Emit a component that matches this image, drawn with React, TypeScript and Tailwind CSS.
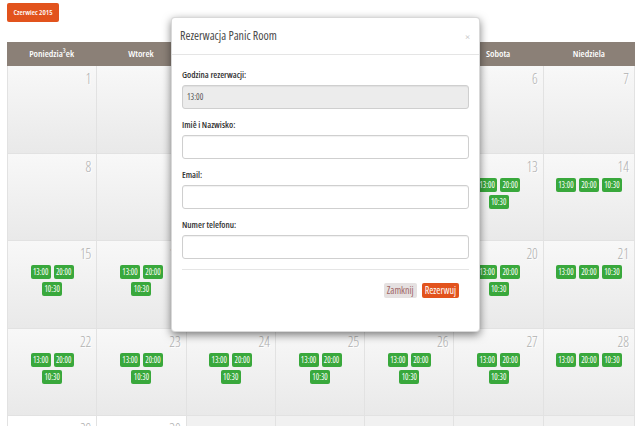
import React from "react";

// Monthly booking calendar with the reservation modal opened on top.
const DAYS = ["Poniedzia³ek", "Wtorek", "Œroda", "Czwartek", "Pi¹tek", "Sobota", "Niedziela"];
const SLOTS = ["13:00", "20:00", "10:30"];

const WEEKS: (number | null)[][] = [
  [1, 2, 3, 4, 5, 6, 7],
  [8, 9, 10, 11, 12, 13, 14],
  [15, 16, 17, 18, 19, 20, 21],
  [22, 23, 24, 25, 26, 27, 28],
  [29, 30, null, null, null, null, null],
];

function Slot({ time }: { time: string }) {
  return (
    <span className="flex h-[14px] w-[20px] items-center justify-center rounded-[2px] bg-[#39a83c] text-[8px] leading-none text-white">
      {time}
    </span>
  );
}

function DayCell({ day, sunday, last }: { day: number | null; sunday: boolean; last: boolean }) {
  if (day === null) {
    return <div className="border-r border-b border-[#e2e2e2] bg-[#f1f1f1]" />;
  }
  return (
    <div
      className={
        "flex flex-col border-r border-b border-[#e2e2e2] " +
        (last ? "bg-white" : "bg-gradient-to-b from-[#f8f8f8] to-[#e9e9e9]")
      }
    >
      <div className="pt-[6px] pr-[5px] text-right text-[14px] font-light leading-[14px] text-[#b0b0b0] [text-shadow:1px_1px_0_#fff]">
        {day}
      </div>
      {day >= 13 && (
        <div
          className={
            "mx-auto mt-[4px] flex flex-wrap justify-center gap-[3px] " +
            (sunday ? "" : "w-[43px]")
          }
        >
          {SLOTS.map((t) => (
            <Slot key={t} time={t} />
          ))}
        </div>
      )}
    </div>
  );
}

function Field({ label, value, readOnly }: { label: string; value?: string; readOnly?: boolean }) {
  return (
    <div>
      <div className="mb-[4px] text-[9px] font-semibold leading-[13px] text-[#333]">{label}</div>
      <div
        className={
          "flex h-[24px] items-center rounded-[3px] border border-[#cfcfcf] pl-[4px] text-[8.5px] text-[#555] shadow-[inset_0_1px_1px_rgba(0,0,0,0.06)] " +
          (readOnly ? "bg-[#ececec]" : "bg-white")
        }
      >
        {value}
      </div>
    </div>
  );
}

export default function App() {
  return (
    <div className="relative h-[426px] w-[640px] overflow-hidden bg-white font-['Open_Sans',sans-serif] [font-stretch:80%]">
      <div className="pt-[3px] pl-[7px]">
        <button className="flex h-[19px] w-[52px] items-center justify-center rounded-[2px] bg-[#e2531d] text-[7.5px] font-semibold text-white">
          Czerwiec 2015
        </button>
      </div>

      <div className="mt-[20px] ml-[7px] w-[628px]">
        <div className="grid h-[24px] grid-cols-[repeat(6,89.3px)_1fr] bg-[#8b8077]">
          {DAYS.map((d) => (
            <div key={d} className="flex items-center justify-center text-[9.5px] font-semibold text-white">
              {d}
            </div>
          ))}
        </div>
        <div className="grid grid-cols-[repeat(6,89.3px)_1fr] auto-rows-[87.5px] border-l border-[#e2e2e2]">
          {WEEKS.map((week, wi) =>
            week.map((day, di) => (
              <DayCell key={wi + "-" + di} day={day} sunday={di === 6} last={wi === 4} />
            ))
          )}
        </div>
      </div>

      {/* reservation modal */}
      <div className="absolute top-[17px] left-[171px] flex h-[315px] w-[309px] flex-col rounded-[4px] border border-[rgba(0,0,0,0.15)] bg-white shadow-[0_3px_9px_rgba(0,0,0,0.5)]">
        <div className="flex h-[37px] items-center justify-between border-b border-[#e5e5e5] pr-[9px] pl-[8px]">
          <span className="text-[12px] text-[#4a4a4a]">Rezerwacja Panic Room</span>
          <span className="text-[11px] leading-none text-[#c8c8c8]">×</span>
        </div>
        <div className="flex flex-col gap-[9px] px-[10px] pt-[13px]">
          <Field label="Godzina rezerwacji:" value="13:00" readOnly />
          <Field label="Imiê i Nazwisko:" />
          <Field label="Email:" />
          <Field label="Numer telefonu:" />
        </div>
        <div className="mx-[10px] mt-[10px] border-t border-[#e5e5e5]" />
        <div className="mt-[13px] flex justify-end gap-[5px] pr-[20px]">
          <button className="flex h-[15px] items-center rounded-[2px] bg-[#e5e1e1] px-[3px] text-[10px] text-[#a06565]">
            Zamknij
          </button>
          <button className="flex h-[15px] items-center rounded-[2px] bg-[#e2531d] px-[3px] text-[10px] text-white">
            Rezerwuj
          </button>
        </div>
      </div>
    </div>
  );
}
